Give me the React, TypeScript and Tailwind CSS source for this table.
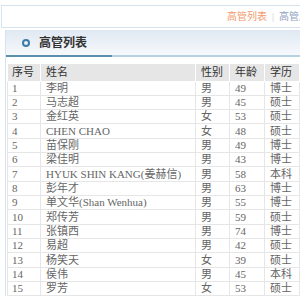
const ROWS: Array<[string, string, string, string]> = [
  ["李明", "男", "49", "博士"],
  ["马志超", "男", "45", "硕士"],
  ["金红英", "女", "53", "硕士"],
  ["CHEN CHAO", "女", "48", "硕士"],
  ["苗保刚", "男", "49", "博士"],
  ["梁佳明", "男", "43", "博士"],
  ["HYUK SHIN KANG(姜赫信)", "男", "58", "本科"],
  ["彭年才", "男", "63", "博士"],
  ["单文华(Shan Wenhua)", "男", "55", "博士"],
  ["郑传芳", "男", "59", "硕士"],
  ["张镇西", "男", "74", "博士"],
  ["易超", "男", "42", "硕士"],
  ["杨笑天", "女", "39", "硕士"],
  ["侯伟", "男", "45", "本科"],
  ["罗芳", "女", "53", "硕士"],
];

const font = { fontFamily: '"Liberation Serif", "Noto Sans CJK SC", serif' };

export default function App() {
  return (
    <div className="w-[300px] h-[300px] overflow-hidden bg-white text-[11px]" style={font}>
      {/* Top crumb box */}
      <div className="mt-[5px] ml-px h-[23px] border border-r-0 border-[#d6e3ef] flex items-center justify-end whitespace-nowrap overflow-hidden">
        <div className="flex items-center gap-[5px] text-[10px] -mr-[19px]">
          <span className="text-[#f29a6c]">高管列表</span>
          <span className="text-[#cccccc]">|</span>
          <span className="text-[#8ea2c0]">高管风采</span>
        </div>
      </div>

      {/* Panel */}
      <div className="mt-[2px] ml-[5px] border-l border-[#d6e3ef]">
        <div className="h-[25px] bg-gradient-to-b from-[#dfe8f2] to-[#f7f9fc] flex items-center pl-[16px]">
          <span className="w-[8px] h-[8px] rounded-full border-2 border-[#3e7ca8]" />
          <span className="ml-[9px] text-[12px] font-semibold text-[#333333]">高管列表</span>
        </div>
        <div className="flex h-[2px]">
          <div className="w-[106px] bg-[#5c8fae]" />
          <div className="flex-1 bg-[#b7d2df]" />
        </div>

        <div className="pt-[6px] pl-[1px]">
          <table className="w-[292px] border-collapse text-[#666666] table-fixed">
            <colgroup>
              <col className="w-[33px]" />
              <col className="w-[155px]" />
              <col className="w-[34px]" />
              <col className="w-[35px]" />
              <col className="w-[35px]" />
            </colgroup>
            <thead>
              <tr className="h-[16px] bg-[#e6e6e6] text-[#333333] text-[11px]">
                <th className="font-normal text-left pl-[4px] border border-white">序号</th>
                <th className="font-normal text-left pl-[5px] border border-white">姓名</th>
                <th className="font-normal text-left pl-[5px] border border-white">性别</th>
                <th className="font-normal text-left pl-[5px] border border-white">年龄</th>
                <th className="font-normal text-left pl-[5px] border border-white">学历</th>
              </tr>
            </thead>
            <tbody>
              {ROWS.map((r, i) => (
                <tr key={i} className="h-[14.33px] leading-[13px]">
                  <td className="pl-[4px] border border-[#e6e6e6]">{i + 1}</td>
                  <td className="pl-[5px] border border-[#e6e6e6] whitespace-nowrap">{r[0]}</td>
                  <td className="pl-[5px] border border-[#e6e6e6]">{r[1]}</td>
                  <td className="pl-[5px] border border-[#e6e6e6]">{r[2]}</td>
                  <td className="pl-[5px] border border-[#e6e6e6]">{r[3]}</td>
                </tr>
              ))}
            </tbody>
          </table>
        </div>
      </div>
    </div>
  );
}
